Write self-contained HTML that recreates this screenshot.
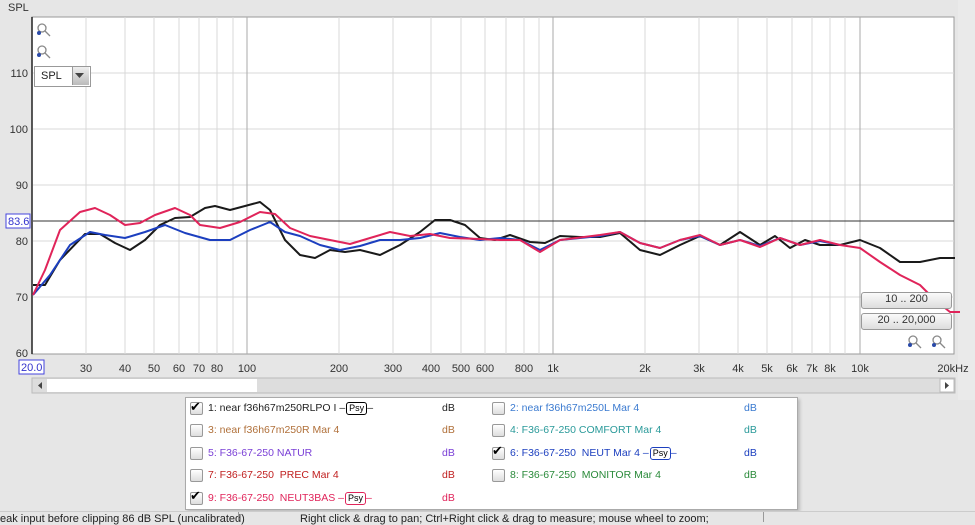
<!DOCTYPE html>
<html><head><meta charset="utf-8"><style>
body{margin:0;width:975px;height:522px;overflow:hidden;background:#e6e6e6;font-family:"Liberation Sans",sans-serif;position:relative}
.t{position:absolute;font-size:11px;color:#333;white-space:nowrap}
.lg{position:absolute;left:185px;top:397px;width:611px;height:111px;background:#fff;border:1px solid #aaa;box-shadow:2px 2px 3px #bbb}
.row{position:absolute;font-size:10.5px;white-space:nowrap}
.cb{position:absolute;width:11px;height:11px;border:1px solid #999;border-radius:2px;background:linear-gradient(#fff,#ddd)}
.psy{display:inline-block;border:1.5px solid;border-radius:3px;padding:0 2px;font-size:9px;line-height:11px;color:#000;margin-left:1px}
.btn{position:absolute;border:1px solid #999;border-radius:3px;background:linear-gradient(#fafafa,#ddd);font-size:11px;text-align:center;color:#333}
</style></head><body>
<div class="t" style="left:8px;top:2px">SPL</div>
<svg width="975" height="400" style="position:absolute;left:0;top:0">
<rect x="958" y="0" width="17" height="400" fill="#eaeaea"/>
<rect x="32" y="17" width="922" height="337" fill="#fff" stroke="#999"/>
<g stroke="#d8d8d8" stroke-width="1">
<line x1="33" y1="73" x2="954" y2="73"/><line x1="33" y1="129" x2="954" y2="129"/><line x1="33" y1="185" x2="954" y2="185"/><line x1="33" y1="241" x2="954" y2="241"/><line x1="33" y1="297" x2="954" y2="297"/>
<line x1="86" y1="17" x2="86" y2="354"/><line x1="125" y1="17" x2="125" y2="354"/><line x1="154" y1="17" x2="154" y2="354"/><line x1="179" y1="17" x2="179" y2="354"/><line x1="199" y1="17" x2="199" y2="354"/><line x1="217" y1="17" x2="217" y2="354"/><line x1="233" y1="17" x2="233" y2="354"/>
<line x1="339" y1="17" x2="339" y2="354"/><line x1="393" y1="17" x2="393" y2="354"/><line x1="431" y1="17" x2="431" y2="354"/><line x1="461" y1="17" x2="461" y2="354"/><line x1="485" y1="17" x2="485" y2="354"/><line x1="506" y1="17" x2="506" y2="354"/><line x1="524" y1="17" x2="524" y2="354"/><line x1="539" y1="17" x2="539" y2="354"/>
<line x1="645" y1="17" x2="645" y2="354"/><line x1="699" y1="17" x2="699" y2="354"/><line x1="738" y1="17" x2="738" y2="354"/><line x1="767" y1="17" x2="767" y2="354"/><line x1="792" y1="17" x2="792" y2="354"/><line x1="812" y1="17" x2="812" y2="354"/><line x1="830" y1="17" x2="830" y2="354"/><line x1="845" y1="17" x2="845" y2="354"/>
</g>
<g stroke="#aaa"><line x1="247" y1="17" x2="247" y2="354"/><line x1="553" y1="17" x2="553" y2="354"/><line x1="860" y1="17" x2="860" y2="354"/></g>
<line x1="33" y1="221" x2="954" y2="221" stroke="#333"/>
<line x1="32" y1="17" x2="32" y2="354" stroke="#222" stroke-width="1.5"/>
<g fill="none" stroke-width="2" stroke-linejoin="round">
<polyline stroke="#1a1a1a" points="33,285 45,285 60,260 85,234 100,234 115,243 130,250 145,240 160,225 175,218 190,217 205,208 215,206 230,210 245,206 260,202 270,210 285,240 300,255 315,258 330,250 345,252 360,250 380,255 400,245 420,232 435,220 450,220 465,225 480,238 495,240 510,235 530,242 545,243 560,236 580,237 600,237 620,233 640,250 660,255 680,245 700,236 720,245 740,232 760,245 775,236 790,248 805,240 820,245 840,245 860,240 880,248 900,262 920,262 940,258 955,258"/>
<polyline stroke="#1c3fbf" points="33,295 50,275 70,245 90,232 105,235 125,238 145,232 165,225 185,233 210,240 230,240 250,230 270,222 285,232 300,236 320,245 340,250 360,246 380,240 400,240 420,238 440,233 460,237 480,240 500,238 520,240 540,250 560,240 600,236 620,232 640,243 660,248 680,240 700,236 720,245 740,240 760,246 780,238 800,245 820,241 840,245"/>
<polyline stroke="#e0245a" points="33,295 45,270 60,230 80,212 95,208 110,215 125,225 140,223 155,215 175,208 190,215 200,225 220,228 240,222 260,212 275,214 290,228 310,236 330,240 350,244 370,238 390,232 410,236 430,234 450,238 480,239 500,240 520,240 540,252 560,240 600,235 620,232 640,243 660,248 680,240 700,235 720,245 740,240 760,247 780,238 800,245 820,240 840,245 860,248 880,262 900,275 920,285 935,300 950,312 960,312"/>
</g>
<g font-size="11" fill="#333" text-anchor="end" font-family="Liberation Sans">
<text x="28" y="77">110</text><text x="28" y="133">100</text><text x="28" y="189">90</text><text x="28" y="245">80</text><text x="28" y="301">70</text><text x="28" y="357">60</text>
</g>
<rect x="6" y="214" width="24" height="14" fill="#fff" stroke="#44d"/><text x="8" y="225" font-size="11" fill="#33c">83.6</text>
<rect x="19" y="360" width="25" height="14" fill="#fff" stroke="#44d"/><text x="21" y="371" font-size="11" fill="#33c">20.0</text>
<g font-size="11" fill="#333" text-anchor="middle" font-family="Liberation Sans">
<text x="86" y="372">30</text><text x="125" y="372">40</text><text x="154" y="372">50</text><text x="179" y="372">60</text><text x="199" y="372">70</text><text x="217" y="372">80</text><text x="247" y="372">100</text><text x="339" y="372">200</text><text x="393" y="372">300</text><text x="431" y="372">400</text><text x="461" y="372">500</text><text x="485" y="372">600</text><text x="524" y="372">800</text><text x="553" y="372">1k</text><text x="645" y="372">2k</text><text x="699" y="372">3k</text><text x="738" y="372">4k</text><text x="767" y="372">5k</text><text x="792" y="372">6k</text><text x="812" y="372">7k</text><text x="830" y="372">8k</text><text x="860" y="372">10k</text><text x="953" y="372">20kHz</text>
</g>
<rect x="32" y="378" width="923" height="15" fill="#ddd" stroke="#bbb"/>
<rect x="47" y="379" width="210" height="13" fill="#fff"/>
<rect x="940" y="379" width="14" height="13" fill="#fff" stroke="#bbb"/>
<path d="M42 382 L38 385.5 L42 389Z" fill="#444"/><path d="M945 382 L949 385.5 L945 389Z" fill="#444"/>
<g fill="none" stroke="#888" stroke-width="1.3">
<circle cx="42" cy="28" r="4"/><line x1="45" y1="31" x2="50" y2="36"/>
<circle cx="42" cy="50" r="4"/><line x1="45" y1="53" x2="50" y2="58"/>
<circle cx="913" cy="340" r="4"/><line x1="916" y1="343" x2="921" y2="348"/>
<circle cx="937" cy="340" r="4"/><line x1="940" y1="343" x2="945" y2="348"/>
</g>
<g fill="#2a4aa8"><circle cx="39" cy="33" r="2"/><circle cx="39" cy="55" r="2"/><circle cx="910" cy="345" r="2"/><circle cx="934" cy="345" r="2"/></g>
</svg>
<div style="position:absolute;left:34px;top:66px;width:55px;height:19px;background:#fff;border:1px solid #999"></div>
<div class="t" style="left:41px;top:70px;color:#222">SPL</div>
<div style="position:absolute;left:72px;top:67px;width:16px;height:18px;background:linear-gradient(#eee,#bbb);border-left:1px solid #999"></div>
<svg style="position:absolute;left:75px;top:73px" width="10" height="6"><path d="M0 0H9L4.5 5Z" fill="#444"/></svg>
<div class="btn" style="left:861px;top:292px;width:89px;height:15px">10 .. 200</div>
<div class="btn" style="left:861px;top:313px;width:89px;height:15px">20 .. 20,000</div>
<div class="lg">
<div class="cb" style="left:4px;top:4px"></div><div class="row" style="left:4px;top:1px;font-size:13px">✔</div>
<div class="row" style="left:22px;top:4px;color:#222">1: near f36h67m250RLPO I –<span class="psy" style="border-color:#000">Psy</span>–</div><div class="row" style="left:256px;top:4px;color:#222">dB</div>
<div class="cb" style="left:4px;top:26px"></div><div class="row" style="left:22px;top:26px;color:#b0703a">3: near f36h67m250R Mar 4</div><div class="row" style="left:256px;top:26px;color:#b0703a">dB</div>
<div class="cb" style="left:4px;top:49px"></div><div class="row" style="left:22px;top:49px;color:#7a3fd6">5: F36-67-250 NATUR</div><div class="row" style="left:256px;top:49px;color:#7a3fd6">dB</div>
<div class="cb" style="left:4px;top:71px"></div><div class="row" style="left:22px;top:71px;color:#c02020">7: F36-67-250&nbsp; PREC Mar 4</div><div class="row" style="left:256px;top:71px;color:#c02020">dB</div>
<div class="cb" style="left:4px;top:94px"></div><div class="row" style="left:4px;top:90px;font-size:13px">✔</div>
<div class="row" style="left:22px;top:94px;color:#e0245a">9: F36-67-250&nbsp; NEUT3BAS –<span class="psy" style="border-color:#e0245a">Psy</span>–</div><div class="row" style="left:256px;top:94px;color:#e0245a">dB</div>
<div class="cb" style="left:306px;top:4px"></div><div class="row" style="left:324px;top:4px;color:#3a7ad0">2: near f36h67m250L Mar 4</div><div class="row" style="left:558px;top:4px;color:#3a7ad0">dB</div>
<div class="cb" style="left:306px;top:26px"></div><div class="row" style="left:324px;top:26px;color:#2a9a9a">4: F36-67-250 COMFORT Mar 4</div><div class="row" style="left:558px;top:26px;color:#2a9a9a">dB</div>
<div class="cb" style="left:306px;top:49px"></div><div class="row" style="left:306px;top:45px;font-size:13px">✔</div>
<div class="row" style="left:324px;top:49px;color:#1c3fbf">6: F36-67-250&nbsp; NEUT Mar 4 –<span class="psy" style="border-color:#1c3fbf">Psy</span>–</div><div class="row" style="left:558px;top:49px;color:#1c3fbf">dB</div>
<div class="cb" style="left:306px;top:71px"></div><div class="row" style="left:324px;top:71px;color:#2a8a3a">8: F36-67-250&nbsp; MONITOR Mar 4</div><div class="row" style="left:558px;top:71px;color:#2a8a3a">dB</div>
</div>
<div style="position:absolute;left:0;top:511px;width:975px;height:11px;background:#e6e6e6;border-top:1px solid #ccc"></div>
<div class="t" style="left:0;top:513px;font-size:11px;color:#222">eak input before clipping 86 dB SPL (uncalibrated)</div>
<div style="position:absolute;left:238px;top:512px;width:1px;height:10px;background:#999"></div>
<div class="t" style="left:300px;top:513px;font-size:11px;color:#222">Right click &amp; drag to pan; Ctrl+Right click &amp; drag to measure; mouse wheel to zoom;</div>
<div style="position:absolute;left:763px;top:512px;width:1px;height:10px;background:#999"></div>
</body></html>
